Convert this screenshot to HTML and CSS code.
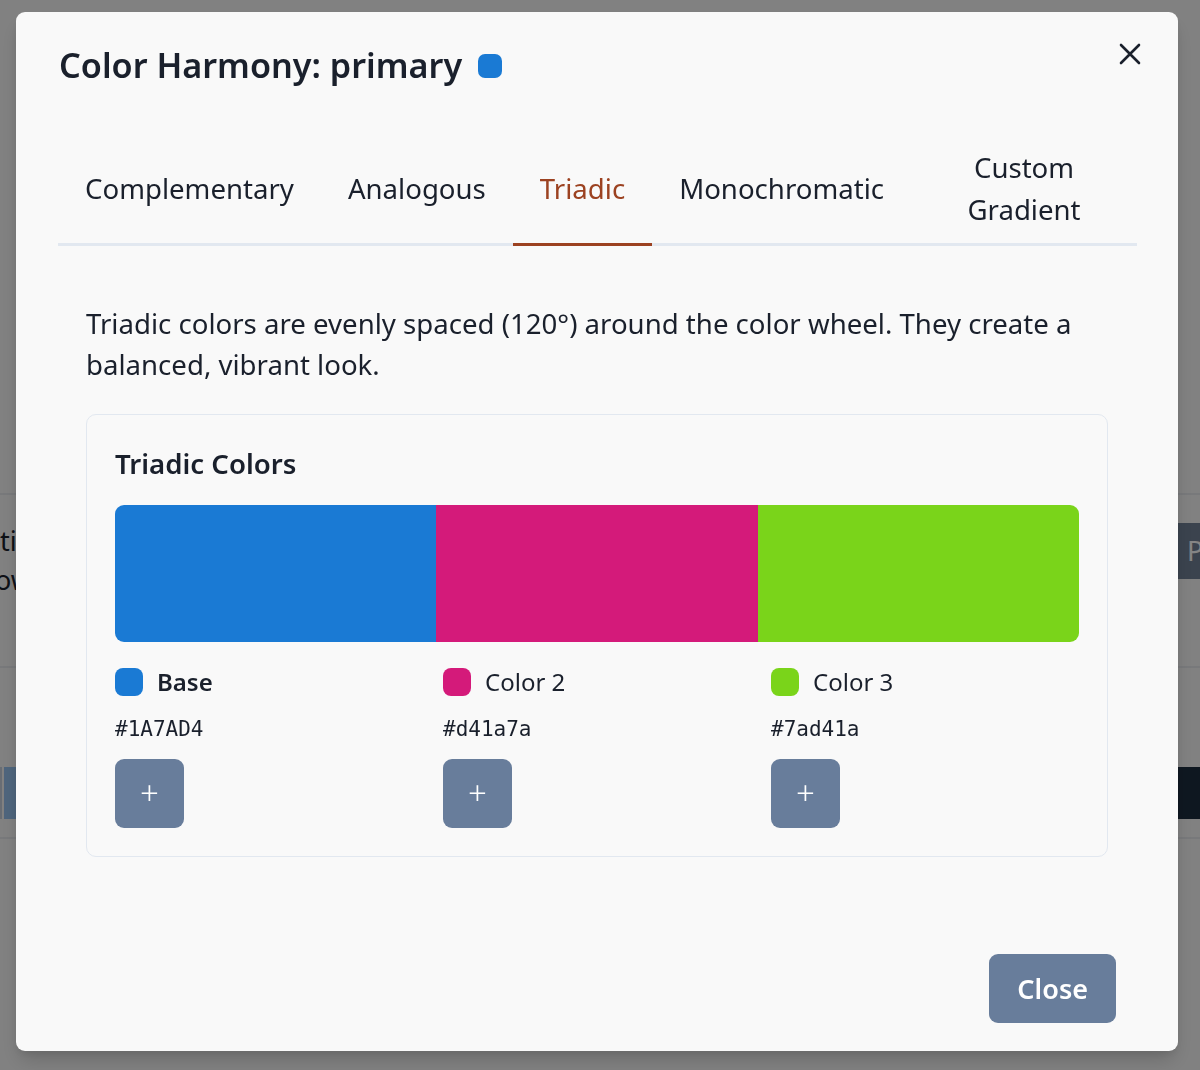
FILE: index.html
```html
<!DOCTYPE html>
<html lang="en">
<head>
<meta charset="utf-8">
<title>Color Harmony</title>
<link rel="stylesheet" href="styles.css">
</head>
<body>
<div class="bg-page">
  <div class="bg-spacer"></div>
  <div class="bg-row bg-row-1">
    <div class="bg-text"><div>tit</div><div class="bg-text-2">ow</div></div>
    <div class="bg-btn">P</div>
  </div>
  <div class="bg-row bg-row-2">
    <div class="bg-left-blocks"><span class="bg-block-gray"></span><span class="bg-block-blue"></span></div>
    <div class="bg-dark-bar"></div>
  </div>
  <div class="bg-row bg-row-3"></div>
</div>
<div class="overlay"></div>

<div class="modal" role="dialog">
  <header class="modal-header">
    <h2 class="modal-title">Color Harmony: primary</h2>
    <span class="title-swatch"></span>
  </header>
  <button class="close-x" aria-label="Close">
    <svg width="22" height="22" viewBox="0 0 22 22"><path d="M2 2 L20 20 M20 2 L2 20" stroke="#1a202c" stroke-width="2.6" stroke-linecap="round" fill="none"/></svg>
  </button>

  <div class="modal-body">
    <div class="tablist">
      <div class="tab">Complementary</div>
      <div class="tab">Analogous</div>
      <div class="tab active">Triadic</div>
      <div class="tab">Monochromatic</div>
      <div class="tab">Custom Gradient</div>
    </div>
    <div class="panel">
      <p class="desc">Triadic colors are evenly spaced (120°) around the color wheel. They create a balanced, vibrant look.</p>
      <div class="card">
        <div class="card-title">Triadic Colors</div>
        <div class="bar">
          <div class="seg seg-blue"></div>
          <div class="seg seg-pink"></div>
          <div class="seg seg-green"></div>
        </div>
        <div class="cols">
          <div class="col">
            <div class="legend"><span class="swatch seg-blue"></span><span class="label bold">Base</span></div>
            <div class="hex">#1A7AD4</div>
            <button class="plus">+</button>
          </div>
          <div class="col">
            <div class="legend"><span class="swatch seg-pink"></span><span class="label">Color 2</span></div>
            <div class="hex">#d41a7a</div>
            <button class="plus">+</button>
          </div>
          <div class="col">
            <div class="legend"><span class="swatch seg-green"></span><span class="label">Color 3</span></div>
            <div class="hex">#7ad41a</div>
            <button class="plus">+</button>
          </div>
        </div>
      </div>
    </div>
  </div>

  <footer class="modal-footer">
    <button class="close-btn">Close</button>
  </footer>
</div>
</body>
</html>
```

FILE: styles.css
```css
html, body {
  margin: 0;
  padding: 0;
  width: 1200px;
  height: 1070px;
  overflow: hidden;
}
body {
  font-family: "Noto Sans", "Open Sans", sans-serif;
  color: #1a202c;
  background: #f7f7f7;
}

/* page behind the overlay */
.bg-page {
  width: 1200px;
  height: 1070px;
  background: #f7f7f7;
  overflow: hidden;
}
.bg-spacer { height: 493px; }
.bg-row {
  border-top: 2px solid #e6e8ec;
  display: flex;
  justify-content: space-between;
  align-items: flex-start;
}
.bg-row-1 { height: 171px; }
.bg-text {
  padding-top: 26px;
  font-size: 27px;
  line-height: 39px;
  color: #1a202c;
}
.bg-text-2 { margin-left: -5px; }
.bg-btn {
  margin-top: 28px;
  height: 56px;
  width: 40px;
  margin-right: -10px;
  background: #718096;
  color: #ffffff;
  font-size: 27px;
  line-height: 56px;
  padding-left: 17px;
  box-sizing: border-box;
  white-space: nowrap;
  overflow: hidden;
}
.bg-row-2 { height: 169px; }
.bg-left-blocks {
  margin-top: 99px;
  height: 52px;
  display: flex;
  gap: 2px;
}
.bg-block-gray { width: 2px; background: #c7d2de; }
.bg-block-blue { width: 14px; background: #97c2ef; }
.bg-dark-bar {
  margin-top: 99px;
  height: 52px;
  width: 22px;
  background: #1c2d3f;
}
.bg-row-3 { height: 40px; }

.overlay {
  position: fixed;
  inset: 0;
  background: rgba(0, 0, 0, 0.48);
}

/* modal */
.modal {
  position: fixed;
  left: 16px;
  top: 12px;
  width: 1162px;
  height: 1039px;
  box-sizing: border-box;
  background: #f9f9f9;
  border-radius: 9px;
  box-shadow: 0 12px 20px -4px rgba(0, 0, 0, 0.18), 0 4px 8px -2px rgba(0, 0, 0, 0.08);
  display: flex;
  flex-direction: column;
}
.modal-header {
  display: flex;
  align-items: center;
  gap: 16px;
  padding: 29px 43px 0 43px;
}
.modal-title {
  margin: 0;
  font-size: 34.2px;
  font-weight: 600;
  line-height: 48px;
  color: #1a202c;
}
.title-swatch {
  width: 24px;
  height: 24px;
  border-radius: 7px;
  background: #1a7ad4;
  margin-top: 1px;
}
.close-x {
  position: absolute;
  top: 30px;
  right: 36px;
  width: 24px;
  height: 24px;
  padding: 1px;
  border: 0;
  background: transparent;
  display: flex;
  align-items: center;
  justify-content: center;
}

.modal-body {
  margin-top: 45px;
  padding: 0 41px 0 42px;
}
.tablist {
  display: flex;
  border-bottom: 3px solid #e2e8f0;
}
.tab {
  display: flex;
  align-items: center;
  justify-content: center;
  text-align: center;
  padding: 12px 27px 13px;
  font-size: 27.6px;
  line-height: 42px;
  margin-bottom: -3px;
  border-bottom: 3px solid transparent;
  color: #1a202c;
}
.tab.active {
  color: #9c4221;
  border-bottom-color: #9c4221;
}
.panel {
  padding: 57px 29px 0 28px;
}
.desc {
  margin: 0;
  font-size: 27.6px;
  line-height: 41px;
}
.card {
  margin-top: 29px;
  border: 1.5px solid #e2e8f0;
  border-radius: 10px;
  padding: 28px;
}
.card-title {
  font-size: 27.6px;
  font-weight: 600;
  line-height: 41px;
}
.bar {
  margin-top: 21px;
  height: 137px;
  border-radius: 9px;
  overflow: hidden;
  display: flex;
}
.seg { flex: 1; }
.seg-blue { background: #1a7ad4; }
.seg-pink { background: #d41a7a; }
.seg-green { background: #7ad41a; }

.cols {
  margin-top: 22px;
  display: grid;
  grid-template-columns: repeat(3, 1fr);
  column-gap: 20px;
}
.legend {
  display: flex;
  align-items: center;
  gap: 14px;
  height: 36px;
}
.swatch {
  width: 28px;
  height: 28px;
  border-radius: 8px;
}
.label {
  font-size: 24px;
  line-height: 36px;
}
.label.bold { font-weight: 600; }
.hex {
  margin-top: 14px;
  font-family: "DejaVu Sans Mono", monospace;
  font-size: 21px;
  line-height: 31px;
}
.plus {
  margin-top: 14px;
  width: 69px;
  height: 69px;
  border: 0;
  border-radius: 9px;
  background: #687d9b;
  color: #ffffff;
  font-family: "Noto Sans", sans-serif;
  font-size: 33px;
  font-weight: 300;
  line-height: 1;
  padding: 0 0 3px 0;
  display: flex;
  align-items: center;
  justify-content: center;
}

.modal-footer {
  margin-top: auto;
  display: flex;
  justify-content: flex-end;
  padding: 0 62px 28px 0;
}
.close-btn {
  height: 69px;
  padding: 0 28px;
  border: 0;
  border-radius: 9px;
  background: #687d9b;
  color: #ffffff;
  font-family: "Noto Sans", sans-serif;
  font-size: 27px;
  font-weight: 600;
}
```
